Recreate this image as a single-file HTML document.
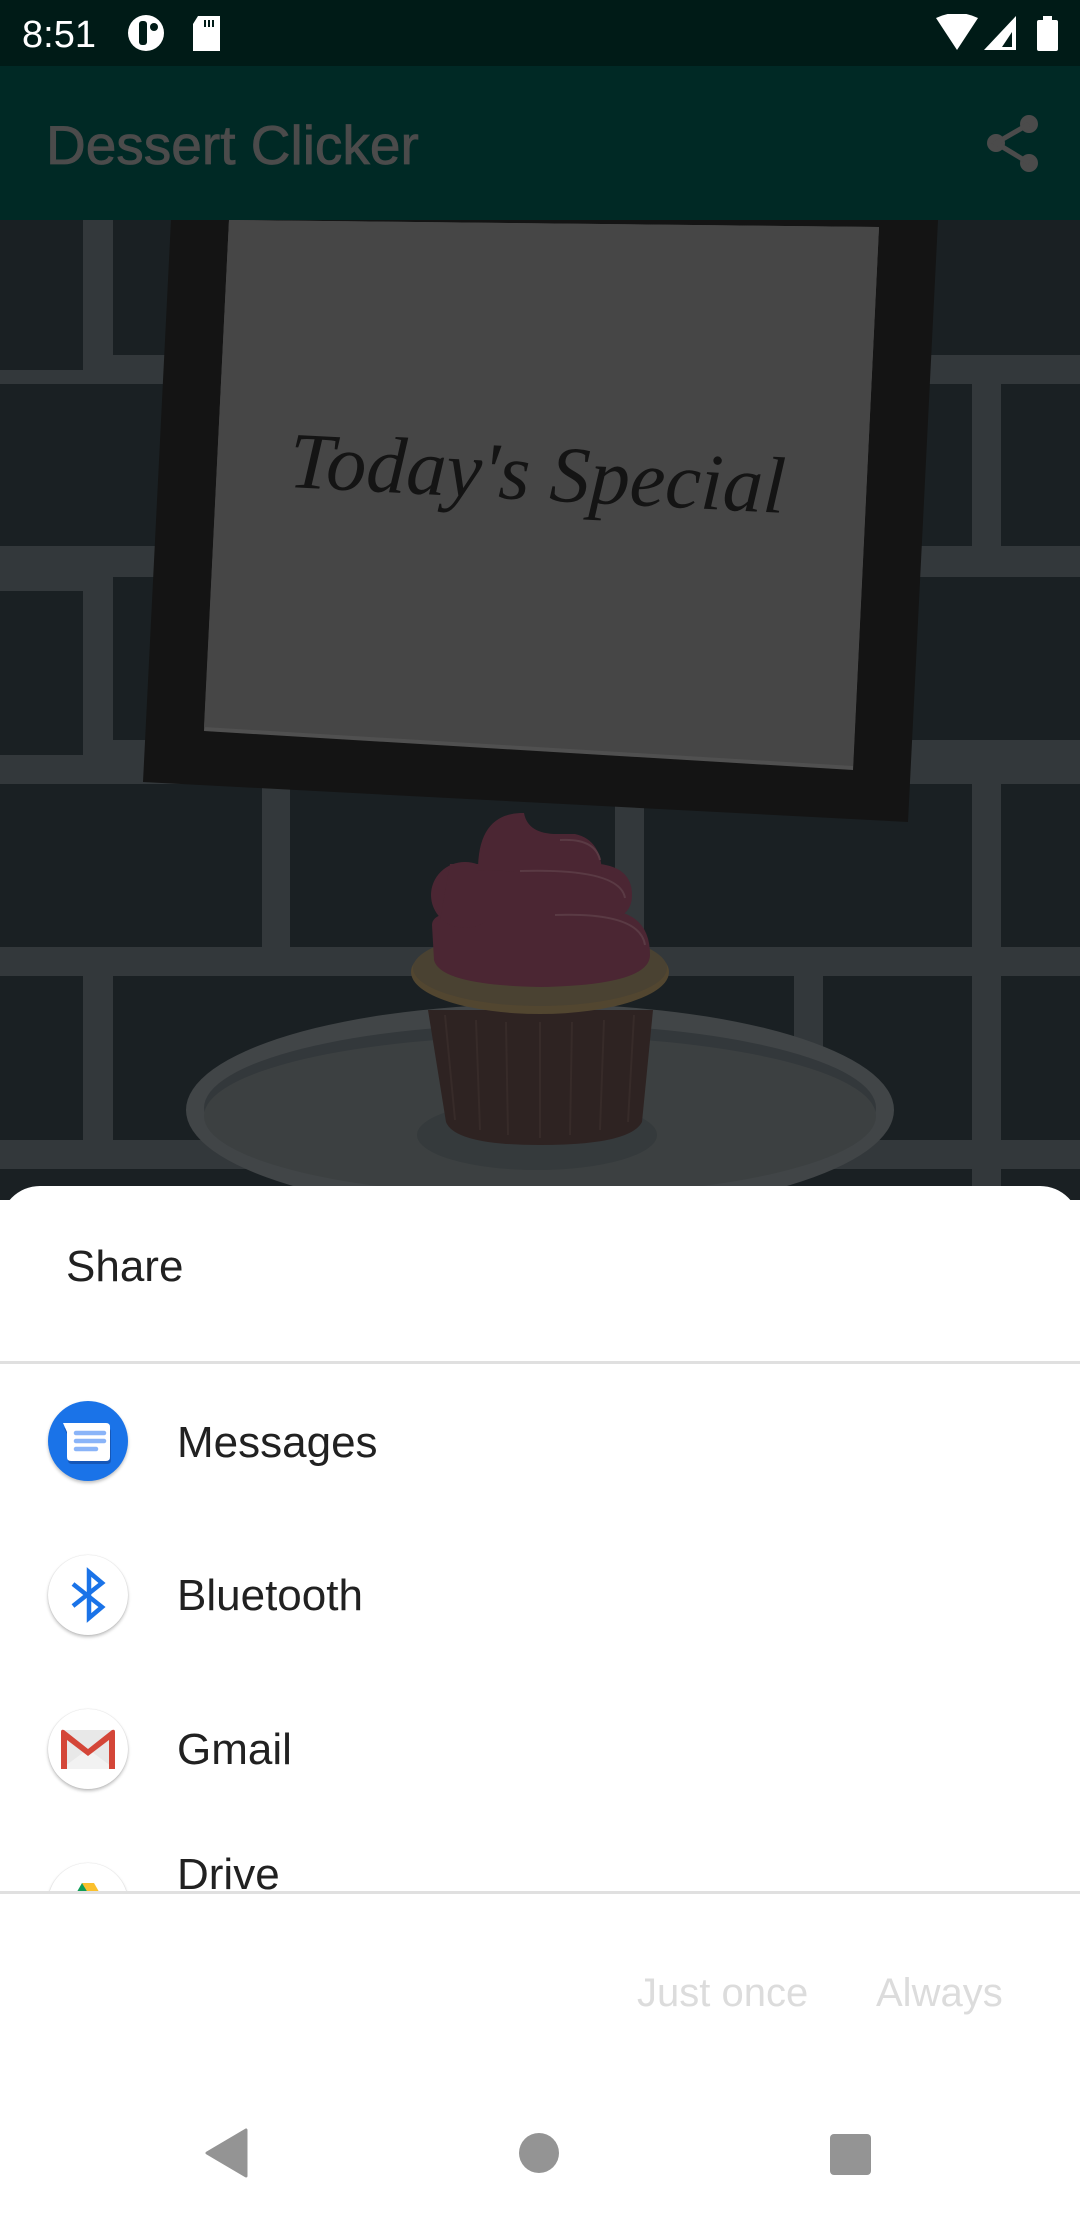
<!DOCTYPE html>
<html><head><meta charset="utf-8"><style>
*{margin:0;padding:0;box-sizing:border-box}
body{width:1080px;height:2220px;overflow:hidden;position:relative;background:#fff;font-family:"Liberation Sans",sans-serif}
.abs{position:absolute}
.t{position:absolute;color:#212121;font-size:44px;line-height:1;white-space:nowrap}
.ic{position:absolute;left:48px;width:80px;height:80px;border-radius:50%;background:#fff;box-shadow:0 2px 3px rgba(0,0,0,.25),0 0 1px rgba(0,0,0,.2)}
</style></head><body>
<svg class="abs" style="left:0;top:0" width="1080" height="1200" viewBox="0 0 1080 1200">
<rect x="0" y="0" width="1080" height="66" fill="#001b17"/>
<rect x="0" y="66" width="1080" height="154" fill="#002925"/>
<rect x="0" y="220" width="1080" height="980" fill="#33383b"/>
<g fill="#1a2023">
<rect x="0" y="220" width="83" height="150"/><rect x="113" y="220" width="967" height="135"/>
<rect x="0" y="384" width="972" height="162"/><rect x="1001" y="384" width="79" height="162"/>
<rect x="0" y="591" width="83" height="164"/><rect x="113" y="577" width="967" height="163"/>
<rect x="0" y="784" width="262" height="163"/><rect x="290" y="784" width="325" height="163"/><rect x="644" y="784" width="328" height="163"/><rect x="1001" y="784" width="79" height="163"/>
<rect x="0" y="976" width="83" height="164"/><rect x="113" y="976" width="681" height="164"/><rect x="823" y="976" width="149" height="164"/><rect x="1001" y="976" width="79" height="164"/>
<rect x="0" y="1169" width="972" height="40"/><rect x="1001" y="1169" width="79" height="40"/>
</g>
<polygon points="171,220 938,220 908,822 143,782" fill="#141414"/>
<polygon points="229,220 879,227 853,770 204,731" fill="#505050"/>
<polygon points="229,220 879,227 853,766 204,727" fill="#464646"/>
<text x="537" y="500" transform="rotate(3 537 482)" text-anchor="middle" font-family="Liberation Serif" font-style="italic" font-size="80" fill="#141414">Today's Special</text>
<ellipse cx="540" cy="1110" rx="354" ry="106" fill="#414547"/>
<ellipse cx="540" cy="1108" rx="336" ry="84" fill="#33383b"/>
<ellipse cx="540" cy="1116" rx="336" ry="80" fill="#3c4041"/>
<ellipse cx="537" cy="1135" rx="120" ry="35" fill="#353a3c"/>
<path d="M428 1010 L653 1010 L642 1122 Q630 1145 540 1145 Q455 1145 446 1122 Z" fill="#2e2322"/>
<g stroke="#372b29" stroke-width="2"><line x1="445" y1="1015" x2="455" y2="1120"/><line x1="476" y1="1020" x2="480" y2="1130"/><line x1="506" y1="1022" x2="508" y2="1135"/><line x1="540" y1="1022" x2="540" y2="1138"/><line x1="572" y1="1022" x2="570" y2="1135"/><line x1="604" y1="1020" x2="600" y2="1130"/><line x1="634" y1="1015" x2="628" y2="1122"/></g>
<ellipse cx="540" cy="972" rx="129" ry="42" fill="#524630"/>
<ellipse cx="540" cy="968" rx="127" ry="38" fill="#4a4232"/>
<g fill="#4b2633">
<path d="M432 925 Q432 913 460 912 L620 912 Q650 920 650 955 Q650 985 540 987 Q440 985 434 960 Z"/>
<ellipse cx="465" cy="895" rx="34" ry="33"/>
<path d="M450 864 L600 864 Q632 868 632 895 Q632 920 600 920 L440 920 Z"/>
<path d="M478 870 Q478 815 520 813 L524 813 Q528 835 560 834 L575 834 Q602 840 602 875 Z"/>
</g>
<g fill="none" stroke="#5a3a44" stroke-width="2"><path d="M560 840 Q595 838 600 860"/><path d="M520 871 Q620 868 625 898"/><path d="M555 915 Q640 912 645 945"/></g>
</svg>
<!-- status bar -->
<div class="abs" style="left:22px;top:15px;color:#fff;font-size:38px;line-height:40px">8:51</div>
<svg class="abs" style="left:124px;top:14px" width="110" height="40" viewBox="0 0 110 40">
<circle cx="22" cy="19" r="18" fill="#fff"/><rect x="15" y="7" width="8" height="24" rx="3" fill="#001b17"/><circle cx="30" cy="13" r="4" fill="#001b17"/>
<path d="M74 2 L96 2 L96 37 L69 37 L69 10 Z" fill="#fff"/><g fill="#001b17"><rect x="80" y="6" width="2" height="7"/><rect x="84" y="6" width="2" height="7"/><rect x="88" y="6" width="2" height="7"/></g>
</svg>
<svg class="abs" style="left:934px;top:14px" width="130" height="40" viewBox="0 0 130 40">
<path d="M2 4 Q23 -6 44 4 L23 36 Z" fill="#fff"/>
<path d="M50 36 L82 36 L82 2 Z" fill="#fff"/><path d="M68 33 L78 33 L78 18 Z" fill="#001b17"/>
<rect x="103" y="6" width="21" height="31" rx="2" fill="#fff"/><rect x="109" y="2" width="9" height="5" fill="#fff"/>
</svg>
<div class="abs" style="left:46px;top:115px;color:#4b4b4b;font-size:55px;line-height:60px;-webkit-text-stroke:0.8px #4b4b4b">Dessert Clicker</div>
<svg class="abs" style="left:984px;top:112px" width="60" height="62" viewBox="0 0 60 62">
<g fill="#4b4b4b"><circle cx="45" cy="12" r="9"/><circle cx="12" cy="31" r="9"/><circle cx="45" cy="51" r="9"/></g>
<path d="M45 12 L12 31 L45 51" stroke="#4b4b4b" stroke-width="5" fill="none"/>
</svg>
<!-- sheet -->
<div class="abs" style="left:0;top:1186px;width:1080px;height:1034px;background:#fff;border-radius:40px 40px 0 0"></div>
<div class="t" style="left:66px;top:1245px">Share</div>
<div class="abs" style="left:0;top:1361px;width:1080px;height:3px;background:#e0e0e0"></div>
<div class="abs" style="left:0;top:1364px;width:1080px;height:527px;overflow:hidden">
 <div class="ic" style="top:37px;background:#1a73e8;box-shadow:0 2px 3px rgba(0,0,0,.25)">
  <svg width="80" height="80" viewBox="0 0 80 80"><path d="M15 24 L58 24 Q62 24 62 28 L62 56 Q62 60 58 60 L23 60 Q19 60 19 56 L19 32 Z" fill="#1557b8" transform="translate(1,3)"/><path d="M15 22 L58 22 Q62 22 62 26 L62 56 Q62 60 58 60 L23 60 Q19 60 19 56 L19 31 Z" fill="#fff"/><g stroke="#8ab4f8" stroke-width="4.5" stroke-linecap="round"><line x1="28" y1="32" x2="56" y2="32"/><line x1="28" y1="40" x2="56" y2="40"/><line x1="28" y1="48" x2="48" y2="48"/></g></svg>
 </div>
 <div class="t" style="left:177px;top:57px">Messages</div>
 <div class="ic" style="top:191px"><svg width="80" height="80" viewBox="0 0 80 80"><path d="M25 29 L54 52 L41 63 L41 17 L54 28 L25 51" fill="none" stroke="#1a73e8" stroke-width="4.5" stroke-linejoin="miter"/></svg></div>
 <div class="t" style="left:177px;top:210px">Bluetooth</div>
 <div class="ic" style="top:345px"><svg width="80" height="80" viewBox="0 0 80 80"><rect x="13" y="21" width="54" height="39" fill="#e8e8e8"/><path d="M13 60 L40 40 L67 60 Z" fill="#f2f2f2"/><path d="M13 60 L13 23 Q13 20 16 21 L40 40 L64 21 Q67 20 67 23 L67 60 L61 60 L61 31 L40 47 L19 31 L19 60 Z" fill="#d44638"/></svg></div>
 <div class="t" style="left:177px;top:364px">Gmail</div>
 <div class="ic" style="top:499px"><svg width="80" height="80" viewBox="0 0 80 80"><path d="M34 20 L46 20 L62 48 L50 48 Z" fill="#fbc02d"/><path d="M34 20 L18 48 L24 58 L40 30 Z" fill="#0f9d58"/></svg></div>
 <div class="t" style="left:177px;top:489px">Drive</div>
</div>
<div class="abs" style="left:0;top:1891px;width:1080px;height:3px;background:#e0e0e0"></div>
<div class="abs" style="left:637px;top:1971px;color:#dcdcdc;font-size:40px;line-height:44px">Just once</div>
<div class="abs" style="left:876px;top:1971px;color:#dcdcdc;font-size:40px;line-height:44px">Always</div>
<!-- nav -->
<svg class="abs" style="left:0;top:2100px" width="1080" height="120" viewBox="0 0 1080 120">
<path d="M246 30 L246 76 L207 53 Z" fill="#949494" stroke="#949494" stroke-width="3" stroke-linejoin="round"/>
<circle cx="539" cy="53" r="20" fill="#949494"/>
<rect x="830" y="34" width="41" height="41" rx="4" fill="#949494"/>
</svg>
</body></html>
